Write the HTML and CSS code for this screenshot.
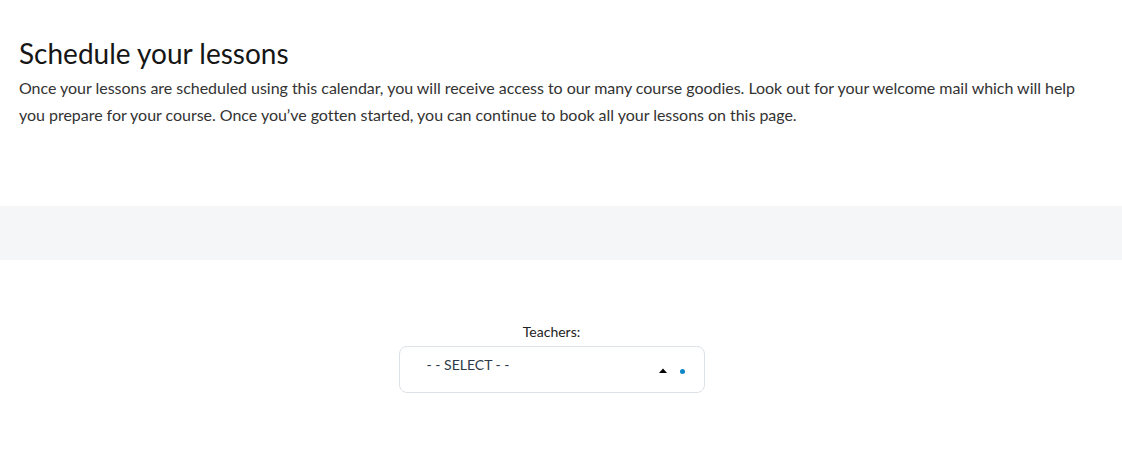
FILE: index.html
```html
<!DOCTYPE html>
<html>
<head>
<meta charset="utf-8">
<link rel="stylesheet" href="styles.css">
</head>
<body>
<section class="intro">
  <h1 class="title">Schedule your lessons</h1>
  <p class="lead">Once your lessons are scheduled using this calendar, you will receive access to our many course goodies. Look out for your welcome mail which will help you prepare for your course. Once you’ve gotten started, you can continue to book all your lessons on this page.</p>
</section>
<div class="band"></div>
<section class="picker">
  <label class="picker-label">Teachers:</label>
  <div class="select">
    <span class="select-value">- - SELECT - -</span>
    <span class="select-icons">
      <svg class="caret" width="8" height="5" viewBox="0 0 8 5"><path d="M0 5 L4 0.5 L8 5 Z" fill="#000"/></svg>
      <span class="dot"></span>
    </span>
  </div>
</section>
</body>
</html>
```
FILE: styles.css
```css
html, body {
  margin: 0;
  padding: 0;
  background: #fff;
}
body {
  font-family: Lato, "Open Sans", sans-serif;
  color: #333;
}
.intro {
  padding: 36px 19px 0 19px;
  height: 170px;
  box-sizing: border-box;
}
.title {
  margin: 0;
  font-size: 28px;
  font-weight: 400;
  line-height: 34px;
  color: #161616;
}
.lead {
  margin: 4px 0 0 0;
  font-size: 16px;
  line-height: 27px;
  color: #333;
  max-width: 1070px;
  letter-spacing: -0.03px;
}
.band {
  margin-top: 36px;
  height: 54px;
  background: #f5f6f8;
}
.picker {
  display: flex;
  flex-direction: column;
  align-items: center;
  padding-top: 63px;
  padding-right: 19px;
}
.picker-label {
  font-size: 14px;
  line-height: 17px;
  color: #222;
  margin-bottom: 6px;
}
.select {
  width: 306px;
  height: 47px;
  box-sizing: border-box;
  border: 1px solid #dde2e8;
  border-radius: 8px;
  display: flex;
  align-items: flex-start;
  justify-content: space-between;
  padding: 9px 19px 0 27px;
}
.select-value {
  font-size: 14px;
  line-height: 17px;
  color: #2d3a48;
}
.select-icons {
  display: flex;
  align-items: center;
  gap: 13px;
  margin-top: 11px;
}
.caret {
  display: block;
}
.dot {
  width: 5px;
  height: 5px;
  border-radius: 50%;
  background: #0c86c6;
  display: block;
  margin-top: 2px;
}
```
